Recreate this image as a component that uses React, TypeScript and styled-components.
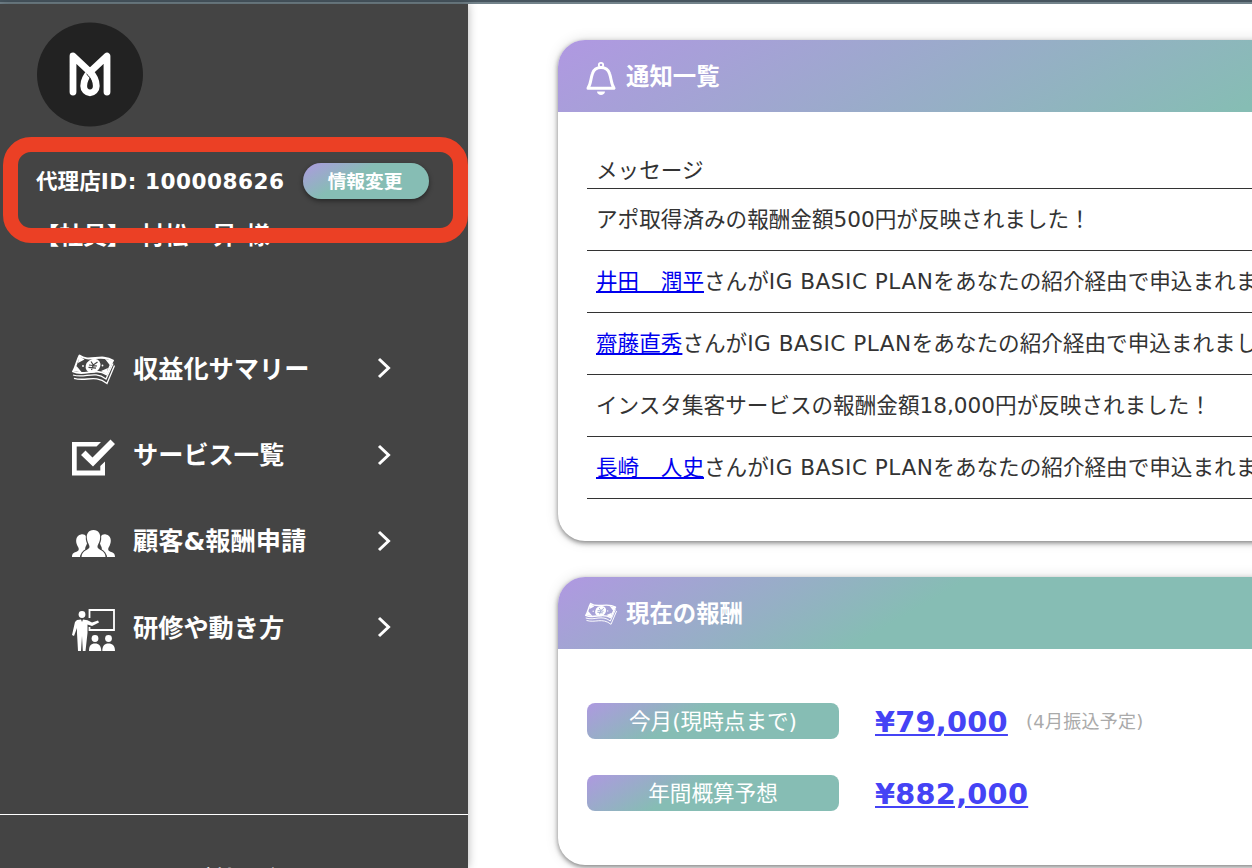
import React from 'react';
import styled, { createGlobalStyle } from 'styled-components';

const GlobalStyle = createGlobalStyle`
  * { box-sizing: border-box; }
  body {
    margin: 0;
    background: #fff;
    color: #333;
    font-family: 'DejaVu Sans', 'Noto Sans CJK JP', sans-serif;
    font-size: 21.6px;
    overflow: hidden;
  }
`;

const Page = styled.div`
  display: flex;
  flex-direction: column;
  width: 100%;
  height: 868px;
  overflow: hidden;
`;

const TopBar = styled.div`
  flex: none;
  height: 4px;
  background: #47555f;
  border-bottom: 2px solid #73838b;
`;

const Body = styled.div`
  flex: 1;
  display: flex;
  min-height: 0;
`;

const Sidebar = styled.aside`
  position: relative;
  z-index: 1;
  flex: none;
  display: flex;
  flex-direction: column;
  width: 468px;
  background: #444;
  color: #fff;
  font-weight: 700;
  box-shadow: 0 0 9px rgba(0, 0, 0, 0.3);
`;

const Logo = styled.svg`
  display: block;
  width: 108px;
  height: 106px;
  margin: 18px 0 0 36px;
`;

const IdRow = styled.div`
  display: flex;
  align-items: center;
  height: 36px;
  margin: 35px 0 0 36px;
`;

const AgencyId = styled.span`
  width: 267px;
  padding-top: 1px;
  line-height: 36px;
  white-space: nowrap;
`;

const Latin = styled.span`
  letter-spacing: 0.5px;
`;

const EditButton = styled.button`
  width: 126px;
  height: 36px;
  padding: 1px 2px 0 0;
  border: 0;
  border-radius: 18px;
  background: linear-gradient(150deg, #ae99e0, #86bdb4 40%);
  box-shadow: 0 2px 5px rgba(0, 0, 0, 0.45);
  color: #fff;
  font: 700 18.7px/35px 'DejaVu Sans', 'Noto Sans CJK JP', sans-serif;
`;

const MemberName = styled.div`
  margin: 19px 0 0 35px;
  font-size: 24px;
  line-height: 36px;
  word-spacing: 1px;
  white-space: pre;
`;

const Highlight = styled.div`
  position: absolute;
  left: 3px;
  top: 133px;
  width: 465px;
  height: 106px;
  border: 15px solid #eb4025;
  border-radius: 28px;
`;

const Menu = styled.nav`
  display: flex;
  flex-direction: column;
  flex: 1;
  padding: 71px 76px 0 72px;
`;

const MenuItem = styled.a`
  display: flex;
  align-items: center;
  height: 86.4px;
  font-size: 25.2px;
`;

const MenuIcon = styled.svg`
  flex: none;
  width: 43px;
  height: 44px;
  margin-top: 5px;
  fill: #fff;
`;

const MenuLabel = styled.span`
  flex: 1;
  margin-left: 18px;
  padding-top: 3px;
  line-height: 40px;
`;

const Chevron = styled.svg`
  width: 15px;
  height: 22px;
  fill: none;
  stroke: #fff;
  stroke-width: 3;
`;

const SideFooter = styled.div`
  height: 54px;
  padding: 46px 0 0 40px;
  overflow: hidden;
  border-top: 1px solid #fff;
  text-align: center;
  line-height: 36px;
`;

const Main = styled.main`
  flex: 1;
  display: flex;
  flex-direction: column;
  gap: 36px;
  min-width: 0;
  padding: 36px 0 0 90px;
`;

const Card = styled.section<{ $height: number }>`
  flex: none;
  width: 900px;
  height: ${(p) => p.$height}px;
  border-radius: 27px;
  background: #fff;
  box-shadow: 0 2px 5px rgba(0, 0, 0, 0.45), 0 0 14px rgba(0, 0, 0, 0.12);
`;

const CardHeader = styled.header<{ $stop: number }>`
  display: flex;
  align-items: center;
  height: 72px;
  padding-left: 27px;
  border-radius: 27px 27px 0 0;
  background: linear-gradient(150deg, #b098e2, #86bdb4 ${(p) => p.$stop}px);
  color: #fff;
`;

const HeaderIcon = styled.svg`
  width: 32px;
  height: 34px;
  margin-top: 4px;
  fill: #fff;
`;

const CardTitle = styled.h2`
  margin: 2px 0 0 9px;
  font-size: 23.4px;
  line-height: 36px;
  font-weight: 700;
`;

const MessageList = styled.div`
  margin: 40px 0 0 29px;
`;

const MessageRow = styled.div<{ $head?: boolean }>`
  height: ${(p) => (p.$head ? 37 : 62)}px;
  padding-left: 9px;
  border-bottom: 1px solid #333;
  line-height: ${(p) => (p.$head ? 38 : 61)}px;
  white-space: nowrap;
`;

const NameLink = styled.a`
  color: #0000ee;
  text-decoration: underline;
`;

const RewardList = styled.div`
  display: flex;
  flex-direction: column;
  gap: 36px;
  padding: 54px 0 0 29px;
`;

const RewardRow = styled.div`
  display: flex;
  align-items: center;
  height: 36px;
`;

const RewardLabel = styled.span`
  width: 252px;
  height: 36px;
  margin-right: 36px;
  border-radius: 8px;
  background: linear-gradient(150deg, #ae99e0, #86bdb4 40%);
  color: #fff;
  line-height: 38px;
  text-align: center;
`;

const Amount = styled.a`
  padding-top: 2px;
  color: #4543f5;
  font-size: 28.8px;
  font-weight: 700;
  line-height: 36px;
  letter-spacing: 0.25px;
  text-decoration: underline;
`;

const Note = styled.span`
  margin: 0 0 2px 18px;
  color: #aaa;
  font-size: 18px;
  letter-spacing: 0.25px;
`;

function MoneyArt() {
  return (
    <>
      <path
        d="M7.500 6.500C17 14 29 4 41 11.500C38 16 37 21 34.500 25.500C23 18 12 28 1 22.500C4 18 4.500 12 7.500 6.500Z"
        fill="none"
        stroke="#fff"
        strokeWidth="1.900"
        strokeLinejoin="round"
      />
      <path d="M7 7L12.500 10.500L6 14ZM1.500 22L4.500 17L10 23.500ZM40.500 11.500L33 10L38.500 17ZM34.500 25L29 22L36 19Z" />
      <ellipse cx="21" cy="16.800" rx="7.800" ry="6.600" transform="rotate(-35 21 16.800)" />
      <g fill="none" stroke="var(--ink)" strokeWidth="1.200">
        <path d="M19 12.500L21.300 16L25.500 13M21.300 16L19.500 21M17 16L25 17M16.500 18.300L24 19.200" />
      </g>
      <circle cx="11" cy="17" r="0.900" />
      <circle cx="30.500" cy="16.500" r="0.900" />
      <path d="M1 26C13 30 22 21 34 30L41 14.500" fill="none" stroke="#fff" strokeWidth="1.300" />
      <path d="M2 29.300C14 33 23 25 35 34.500L42.500 16.500" fill="none" stroke="#fff" strokeWidth="1.300" />
    </>
  );
}

function BellArt() {
  return (
    <>
      <circle cx="16" cy="4" r="2.200" fill="none" stroke="#fff" strokeWidth="1.800" />
      <path d="M3 27.200C6 23 5.500 18 7.500 12.500C9 8 12 6.600 16 6.600S23 8 24.500 12.500C26.500 18 26 23 29 27.200Z" fill="none" stroke="#fff" strokeWidth="3" strokeLinejoin="round" />
      <path d="M12 30.500H20C19.800 35 12.200 35 12 30.500Z" />
    </>
  );
}

function CheckArt() {
  return (
    <>
      <path d="M0 7H29L24.500 11.500H4.700V35.500H28.300V31L33 26.500V40.500H0Z" />
      <path d="M9 20L13.500 15.500L20.500 22.500L38.500 4.500L43 9L21 31.500Z" />
    </>
  );
}

function PeopleArt() {
  return (
    <g transform="translate(0 5)">
      <path d="M9 8.500C13 7.500 16 11 15.200 16C15 19 13.500 20.500 13.200 22C13 24 15 24.500 12 26C9.500 27.500 8.500 29 8 31H0C0 27 2 26.800 5 25.500C7 24.500 7.500 23 5.500 20C3 15 4 9.500 9 8.500Z" />
      <path d="M34 8.500C30 7.500 27 11 27.800 16C28 19 29.500 20.500 29.800 22C30 24 28 24.500 31 26C33.500 27.500 34.500 29 35 31H43C43 27 41 26.800 38 25.500C36 24.500 35.500 23 37.500 20C40 15 39 9.500 34 8.500Z" />
      <path stroke="#444" strokeWidth="2.400" paintOrder="stroke" d="M21.500 4C26.500 4 29 8 28 13C27.500 17 25.500 18.500 25.500 21C25.500 24 33.500 24 33.500 31H9.500C9.500 24 17.500 24 17.500 21C17.500 18.500 15.500 17 15 13C14 8 16.500 4 21.500 4Z" />
    </g>
  );
}

function TrainingArt() {
  return (
    <g transform="translate(0 1)">
      <circle cx="10" cy="5.500" r="3.400" />
      <path d="M5 11L9 10.500L10 13L11 10.500L15.500 11.200L20 13.500L26 11.500L27 13.500L20 17L15.500 15.500V24L13.500 42H10.800L10 27L9 42H6L5 24V19L2 27L0 26L3 13Z" />
      <path d="M17.500 9V1H42V21H17.500V18" fill="none" stroke="#fff" strokeWidth="1.800" />
      <circle cx="23" cy="29.500" r="3.400" />
      <circle cx="36.500" cy="29.500" r="3.400" />
      <path d="M17 42C17 36.500 19 34.500 23 34.500S29 36.500 29.300 42ZM30.300 42C30.500 36.500 32.500 34.500 36.500 34.500S43 36.500 43 42Z" />
    </g>
  );
}

const menu = [
  { label: '収益化サマリー', Art: MoneyArt },
  { label: 'サービス一覧', Art: CheckArt },
  { label: '顧客&報酬申請', Art: PeopleArt },
  { label: '研修や動き方', Art: TrainingArt },
];

const messages = [
  { text: 'アポ取得済みの報酬金額500円が反映されました！' },
  { name: '井田　潤平' },
  { name: '齋藤直秀' },
  { text: 'インスタ集客サービスの報酬金額18,000円が反映されました！' },
  { name: '長崎　人史' },
];

export default function App() {
  return (
    <Page>
      <GlobalStyle />
      <TopBar />
      <Body>
        <Sidebar>
          <Logo viewBox="0 0 108 106">
            <ellipse cx="54" cy="52.500" rx="53" ry="52" fill="#222" />
            <path
              d="M37 70V34L54 50C58 54 60.300 59 60.300 64A6.300 6.800 0 0 1 47.700 64C47.700 58 51 53 55 49L71 34V70"
              fill="none"
              stroke="#fff"
              strokeWidth="6.800"
              strokeLinecap="round"
              strokeLinejoin="round"
            />
            <path d="M50.500 52C53 54 54.500 56.500 55 59.500" fill="none" stroke="#222" strokeWidth="1" />
          </Logo>
          <IdRow>
            <AgencyId>
              代理店<Latin>ID: 100008626</Latin>
            </AgencyId>
            <EditButton>情報変更</EditButton>
          </IdRow>
          <MemberName>【社員】 村松　昇 様</MemberName>
          <Highlight />
          <Menu>
            {menu.map(({ label, Art }) => (
              <MenuItem key={label}>
                <MenuIcon viewBox="0 0 43 44" style={{ '--ink': '#444' } as React.CSSProperties}>
                  <Art />
                </MenuIcon>
                <MenuLabel>{label}</MenuLabel>
                <Chevron viewBox="0 0 15 22">
                  <path d="M2 2L11.500 11L2 20" />
                </Chevron>
              </MenuItem>
            ))}
          </Menu>
          <SideFooter>ご利用ガイド</SideFooter>
        </Sidebar>
        <Main>
          <Card $height={501}>
            <CardHeader $stop={402}>
              <HeaderIcon viewBox="0 0 32 34">
                <BellArt />
              </HeaderIcon>
              <CardTitle>通知一覧</CardTitle>
            </CardHeader>
            <MessageList>
              <MessageRow $head>メッセージ</MessageRow>
              {messages.map((m, i) => (
                <MessageRow key={i}>
                  {m.name ? (
                    <>
                      <NameLink>{m.name}</NameLink>
                      さんが<Latin>IG BASIC PLAN</Latin>をあなたの紹介経由で申込まれました！
                    </>
                  ) : (
                    m.text
                  )}
                </MessageRow>
              ))}
            </MessageList>
          </Card>
          <Card $height={288}>
            <CardHeader $stop={207}>
              <HeaderIcon viewBox="0 2 43 40" style={{ '--ink': '#a0a8d2' } as React.CSSProperties}>
                <MoneyArt />
              </HeaderIcon>
              <CardTitle>現在の報酬</CardTitle>
            </CardHeader>
            <RewardList>
              <RewardRow>
                <RewardLabel>今月(現時点まで)</RewardLabel>
                <Amount>¥79,000</Amount>
                <Note>(4月振込予定)</Note>
              </RewardRow>
              <RewardRow>
                <RewardLabel>年間概算予想</RewardLabel>
                <Amount>¥882,000</Amount>
              </RewardRow>
            </RewardList>
          </Card>
        </Main>
      </Body>
    </Page>
  );
}
